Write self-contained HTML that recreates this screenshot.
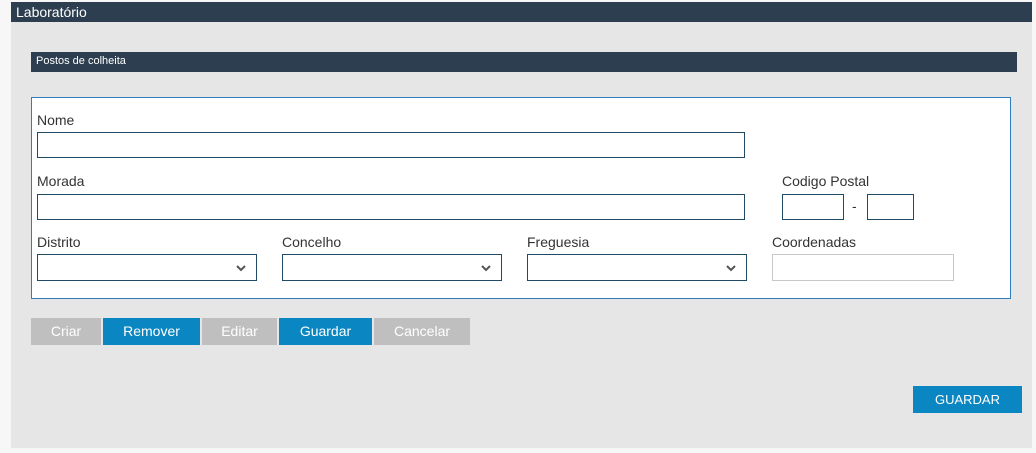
<!DOCTYPE html>
<html><head><meta charset="utf-8"><style>
*{box-sizing:border-box;margin:0;padding:0}
body{width:1036px;height:453px;background:#f7f7f7;font-family:"Liberation Sans",sans-serif;position:relative;overflow:hidden;color:#333}
.a{position:absolute}
.hdr{left:11px;top:2px;width:1021px;height:20px;background:#2c3e4f;color:#fff;font-size:14px;line-height:20px;padding-left:5px}
.panel{left:11px;top:22px;width:1021px;height:426px;background:#e6e6e6}
.sec{left:31px;top:52px;width:986px;height:20px;background:#2c3e4f;color:#fff;font-size:11px;line-height:19px;padding-left:5px}
.box{left:31px;top:97px;width:980px;height:202px;background:#fff;border:1px solid #2f7fc0}
.lbl{font-size:14px;color:#333}
.in{background:#fff;border:1px solid #1f4a66}
.sel svg{position:absolute;right:10px;top:9px}
.btn{top:318px;height:27px;color:#fff;font-size:14px;line-height:27px;text-align:center}
.g{background:#bfbfbf}.b{background:#0a87c2}
</style></head><body>
<div class="a hdr">Laboratório</div>
<div class="a panel"></div>
<div class="a sec">Postos de colheita</div>
<div class="a box"></div>
<div class="a lbl" style="left:37px;top:112px">Nome</div>
<div class="a in" style="left:37px;top:132px;width:708px;height:26px"></div>
<div class="a lbl" style="left:37px;top:173px">Morada</div>
<div class="a in" style="left:37px;top:194px;width:708px;height:26px"></div>
<div class="a lbl" style="left:782px;top:173px">Codigo Postal</div>
<div class="a in" style="left:782px;top:194px;width:62px;height:26px"></div>
<div class="a lbl" style="left:852px;top:198px">-</div>
<div class="a in" style="left:867px;top:194px;width:47px;height:26px"></div>
<div class="a lbl" style="left:37px;top:234px">Distrito</div>
<div class="a lbl" style="left:282px;top:234px">Concelho</div>
<div class="a lbl" style="left:527px;top:234px">Freguesia</div>
<div class="a lbl" style="left:772px;top:234px">Coordenadas</div>
<div class="a in sel" style="left:37px;top:254px;width:220px;height:27px"><svg width="10" height="8"><path d="M1 2l4 4 4-4" stroke="#555" stroke-width="2" fill="none"/></svg></div>
<div class="a in sel" style="left:282px;top:254px;width:220px;height:27px"><svg width="10" height="8"><path d="M1 2l4 4 4-4" stroke="#555" stroke-width="2" fill="none"/></svg></div>
<div class="a in sel" style="left:527px;top:254px;width:220px;height:27px"><svg width="10" height="8"><path d="M1 2l4 4 4-4" stroke="#555" stroke-width="2" fill="none"/></svg></div>
<div class="a" style="left:772px;top:254px;width:182px;height:27px;border:1px solid #c8c8c8;background:#fff"></div>
<div class="a btn g" style="left:31px;width:70px">Criar</div>
<div class="a btn b" style="left:103px;width:97px">Remover</div>
<div class="a btn g" style="left:202px;width:75px">Editar</div>
<div class="a btn b" style="left:279px;width:93px">Guardar</div>
<div class="a btn g" style="left:374px;width:96px">Cancelar</div>
<div class="a btn b" style="left:913px;top:386px;width:109px;font-size:13px">GUARDAR</div>
</body></html>
